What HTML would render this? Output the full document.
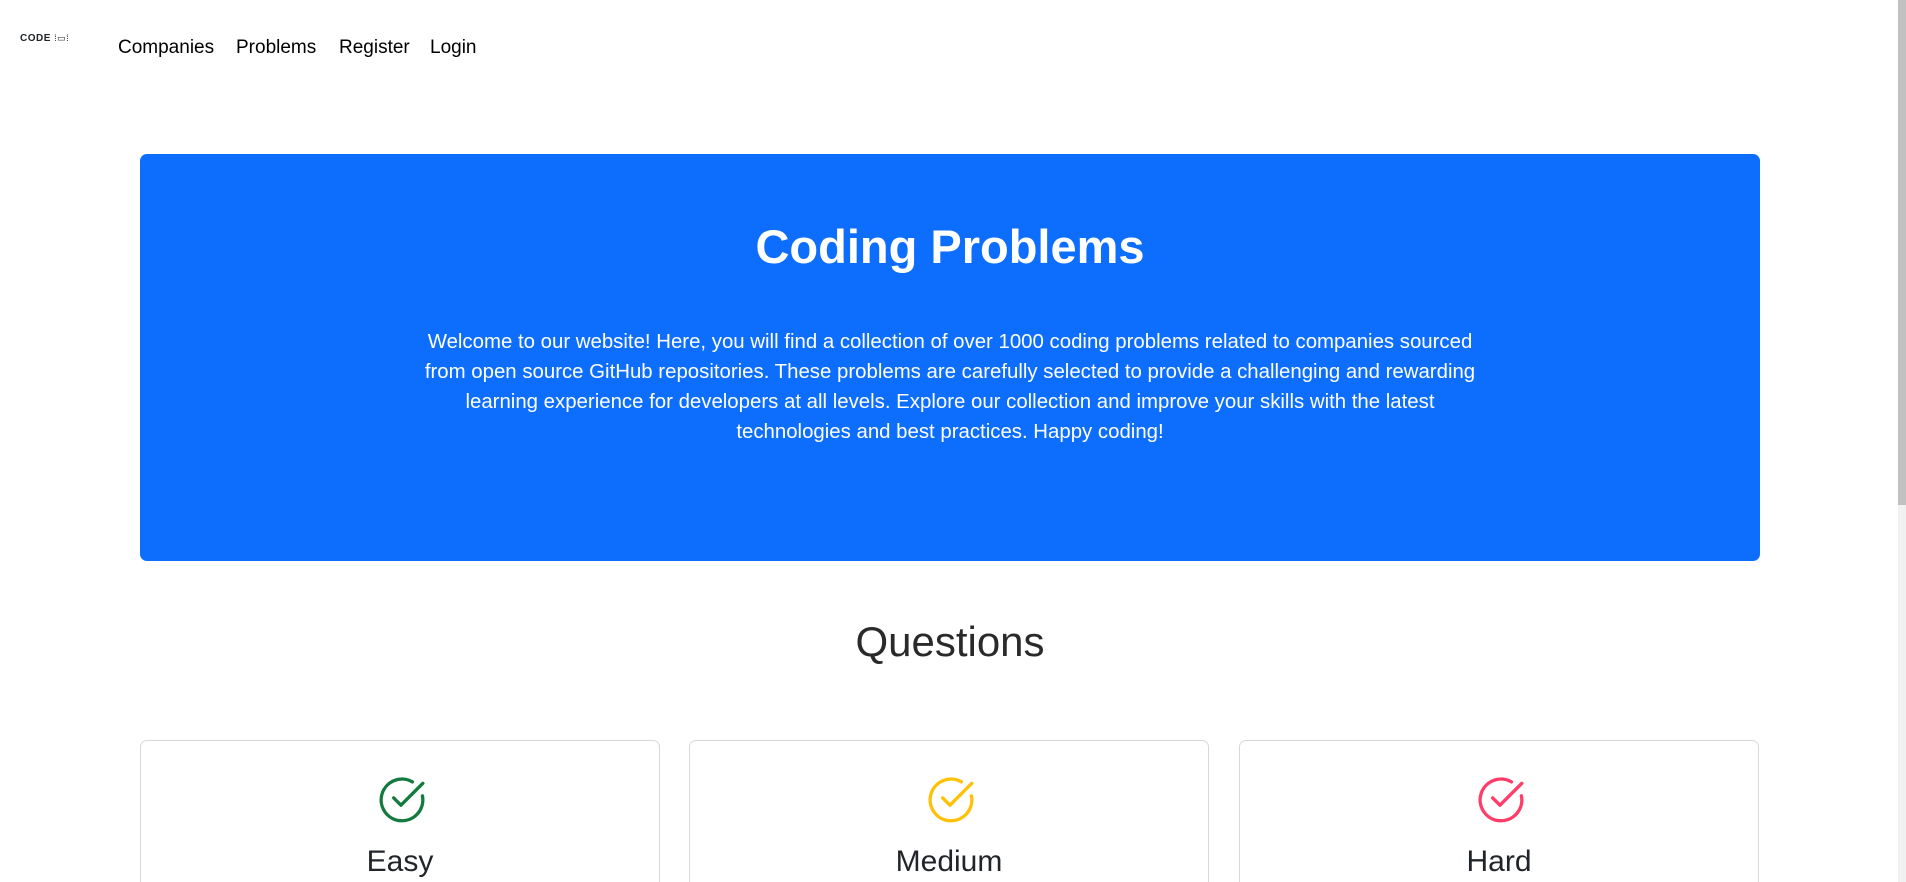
<!DOCTYPE html>
<html><head><meta charset="utf-8"><style>
*{margin:0;padding:0;box-sizing:border-box}
html,body{width:1906px;height:882px;overflow:hidden}
body{background:#fff;font-family:"Segoe UI","Liberation Sans",sans-serif;color:#212529;position:relative}
.nav a{position:absolute;top:37px;font-size:19px;color:#000;text-decoration:none}
.logo{position:absolute;left:20px;top:33px;font-size:10px;font-weight:bold;letter-spacing:0.5px}
.hero{position:absolute;left:140px;top:154px;width:1620px;height:407px;background:#0d6efd;border-radius:7px;color:#fff;text-align:center}
.hero h1{position:absolute;left:0;right:0;top:60px;font-size:47px;font-weight:bold;line-height:66px}
.hero p{position:absolute;left:0;right:0;top:173px;font-size:20.4px;line-height:30px;white-space:nowrap}
.q{position:absolute;top:614px;left:140px;width:1620px;text-align:center;font-size:42px;font-weight:300;line-height:56px;color:#2a2a2a}
.card{position:absolute;top:740px;width:520px;height:170px;border:1px solid #d6d8db;border-radius:7px;text-align:center}
.card svg{position:absolute;left:236px;top:34px}
.card span{position:absolute;left:0;right:0;top:101px;font-size:30px;font-weight:300;line-height:40px}
.sb{position:absolute;right:0;top:0;width:8px;height:882px;background:#f1f1f1}
.sb div{width:8px;height:505px;background:#c1c1c1}
</style></head><body>
<div class="logo">CODE <span style="font-weight:normal;font-size:9px">⁞▭⁞</span></div>
<div class="nav"><a style="left:118px">Companies</a><a style="left:236px">Problems</a><a style="left:339px">Register</a><a style="left:430px">Login</a></div>
<div class="hero"><h1>Coding Problems</h1>
<p>Welcome to our website! Here, you will find a collection of over 1000 coding problems related to companies sourced<br>from open source GitHub repositories. These problems are carefully selected to provide a challenging and rewarding<br>learning experience for developers at all levels. Explore our collection and improve your skills with the latest<br>technologies and best practices. Happy coding!</p></div>
<div class="q">Questions</div>
<div class="card" style="left:140px"><svg width="50" height="50" viewBox="0 0 24 24" fill="none" stroke="#157a40" stroke-width="1.6" stroke-linecap="round" stroke-linejoin="round"><path d="M21.8 10A10 10 0 1 1 17 3.3"/><path d="m8 11 3.5 3.5L22 4"/></svg><span>Easy</span></div>
<div class="card" style="left:689px"><svg width="50" height="50" viewBox="0 0 24 24" fill="none" stroke="#ffc107" stroke-width="1.6" stroke-linecap="round" stroke-linejoin="round"><path d="M21.8 10A10 10 0 1 1 17 3.3"/><path d="m8 11 3.5 3.5L22 4"/></svg><span>Medium</span></div>
<div class="card" style="left:1239px"><svg width="50" height="50" viewBox="0 0 24 24" fill="none" stroke="#ff3d68" stroke-width="1.6" stroke-linecap="round" stroke-linejoin="round"><path d="M21.8 10A10 10 0 1 1 17 3.3"/><path d="m8 11 3.5 3.5L22 4"/></svg><span>Hard</span></div>
<div class="sb"><div></div></div>
</body></html>
